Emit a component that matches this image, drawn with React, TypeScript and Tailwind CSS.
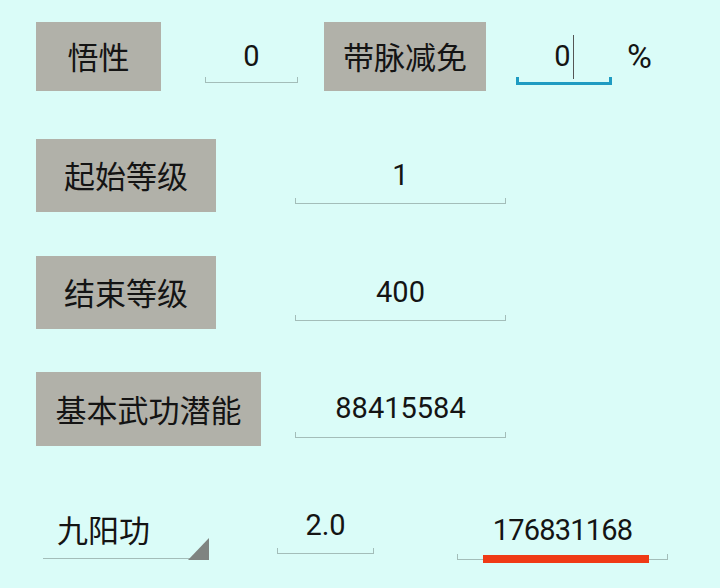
import React from 'react';

const cjk = { fontFamily: '"Noto Sans CJK SC", "Noto Sans", sans-serif' };
const num = { fontFamily: 'Roboto, "Noto Sans", sans-serif' };

function Label({ text, w }: { text: string; w: string }) {
  return (
    <div
      className={`${w} h-full shrink-0 bg-[#b1b1a9] flex items-center justify-center text-[31px] text-[#141414]`}
      style={cjk}
    >
      {text}
    </div>
  );
}

// EditText with the thin underline + end ticks
function Field({
  value,
  w,
  active = false,
  cursor = false,
}: {
  value: string;
  w: string;
  active?: boolean;
  cursor?: boolean;
}) {
  return (
    <div className={`${w} h-full shrink-0 grid`}>
      <div
        className="[grid-area:1/1] flex items-center justify-center text-[29px] text-[#141414]"
        style={num}
      >
        {value}
        {cursor && <span className="ml-[2px] inline-block w-px h-[44px] bg-[#555]" />}
      </div>
      <div
        className={
          active
            ? '[grid-area:1/1] self-end mb-[6px] h-[8px] border-x-[3px] border-b-[3px] border-[#1f9bc2]'
            : '[grid-area:1/1] self-end mb-[8px] h-[6px] border-x border-b border-[#a3bdb9]'
        }
      />
    </div>
  );
}

export default function App() {
  return (
    <div className="w-[720px] h-[588px] bg-[#dafcf8] overflow-hidden">
      {/* row 1 */}
      <div className="flex items-stretch h-[69px] mt-[22px] pl-[36px]">
        <Label text="悟性" w="w-[125px]" />
        <div className="ml-[44px] flex">
          <Field value="0" w="w-[93px]" />
        </div>
        <div className="ml-[26px] flex">
          <Label text="带脉减免" w="w-[162px]" />
        </div>
        <div className="ml-[30px] flex">
          <Field value="0" w="w-[96px]" active cursor />
        </div>
        <div
          className="ml-[15px] flex items-center text-[34px] text-[#141414] pb-[1px]"
          style={num}
        >
          %
        </div>
      </div>

      {/* row 2 */}
      <div className="flex items-stretch h-[73px] mt-[48px] pl-[36px]">
        <Label text="起始等级" w="w-[180px]" />
        <div className="ml-[79px] flex">
          <Field value="1" w="w-[211px]" />
        </div>
      </div>

      {/* row 3 */}
      <div className="flex items-stretch h-[73px] mt-[44px] pl-[36px]">
        <Label text="结束等级" w="w-[180px]" />
        <div className="ml-[79px] flex">
          <Field value="400" w="w-[211px]" />
        </div>
      </div>

      {/* row 4 */}
      <div className="flex items-stretch h-[74px] mt-[43px] pl-[36px]">
        <Label text="基本武功潜能" w="w-[225px]" />
        <div className="ml-[34px] flex">
          <Field value="88415584" w="w-[211px]" />
        </div>
      </div>

      {/* row 5 */}
      <div className="flex items-stretch h-[62px] mt-[53px] pl-[43px]">
        {/* spinner */}
        <div className="w-[166px] grid">
          <div
            className="[grid-area:1/1] self-start mt-[12px] pl-[14px] text-[31px] leading-[36px] text-[#141414]"
            style={cjk}
          >
            九阳功
          </div>
          <div className="[grid-area:1/1] self-end mb-[2px] h-[1.5px] bg-[#a3bdb9]" />
          <svg
            className="[grid-area:1/1] self-end justify-self-end mb-[1px]"
            width="21"
            height="22"
            viewBox="0 0 21 22"
          >
            <polygon points="21,0 21,22 0,22" fill="#7f8481" />
          </svg>
        </div>

        <div className="ml-[68px] w-[97px] grid">
          <div
            className="[grid-area:1/1] self-start mt-[8px] text-center text-[29px] leading-[36px] text-[#141414]"
            style={num}
          >
            2.0
          </div>
          <div className="[grid-area:1/1] self-end mb-[7px] h-[6px] border-x border-b border-[#a3bdb9]" />
        </div>

        <div className="ml-[83px] w-[211px] grid">
          <div
            className="[grid-area:1/1] self-start mt-[13px] text-center text-[29px] leading-[36px] text-[#141414] tracking-[-0.8px]"
            style={num}
          >
            176831168
          </div>
          <div className="[grid-area:1/1] self-end mb-[1px] h-[6px] border-x border-b border-[#a3bdb9]" />
          <div className="[grid-area:1/1] self-end mb-[-2px] ml-[26px] mr-[19px] h-[8px] bg-[#ef3a16]" />
        </div>
      </div>
    </div>
  );
}
